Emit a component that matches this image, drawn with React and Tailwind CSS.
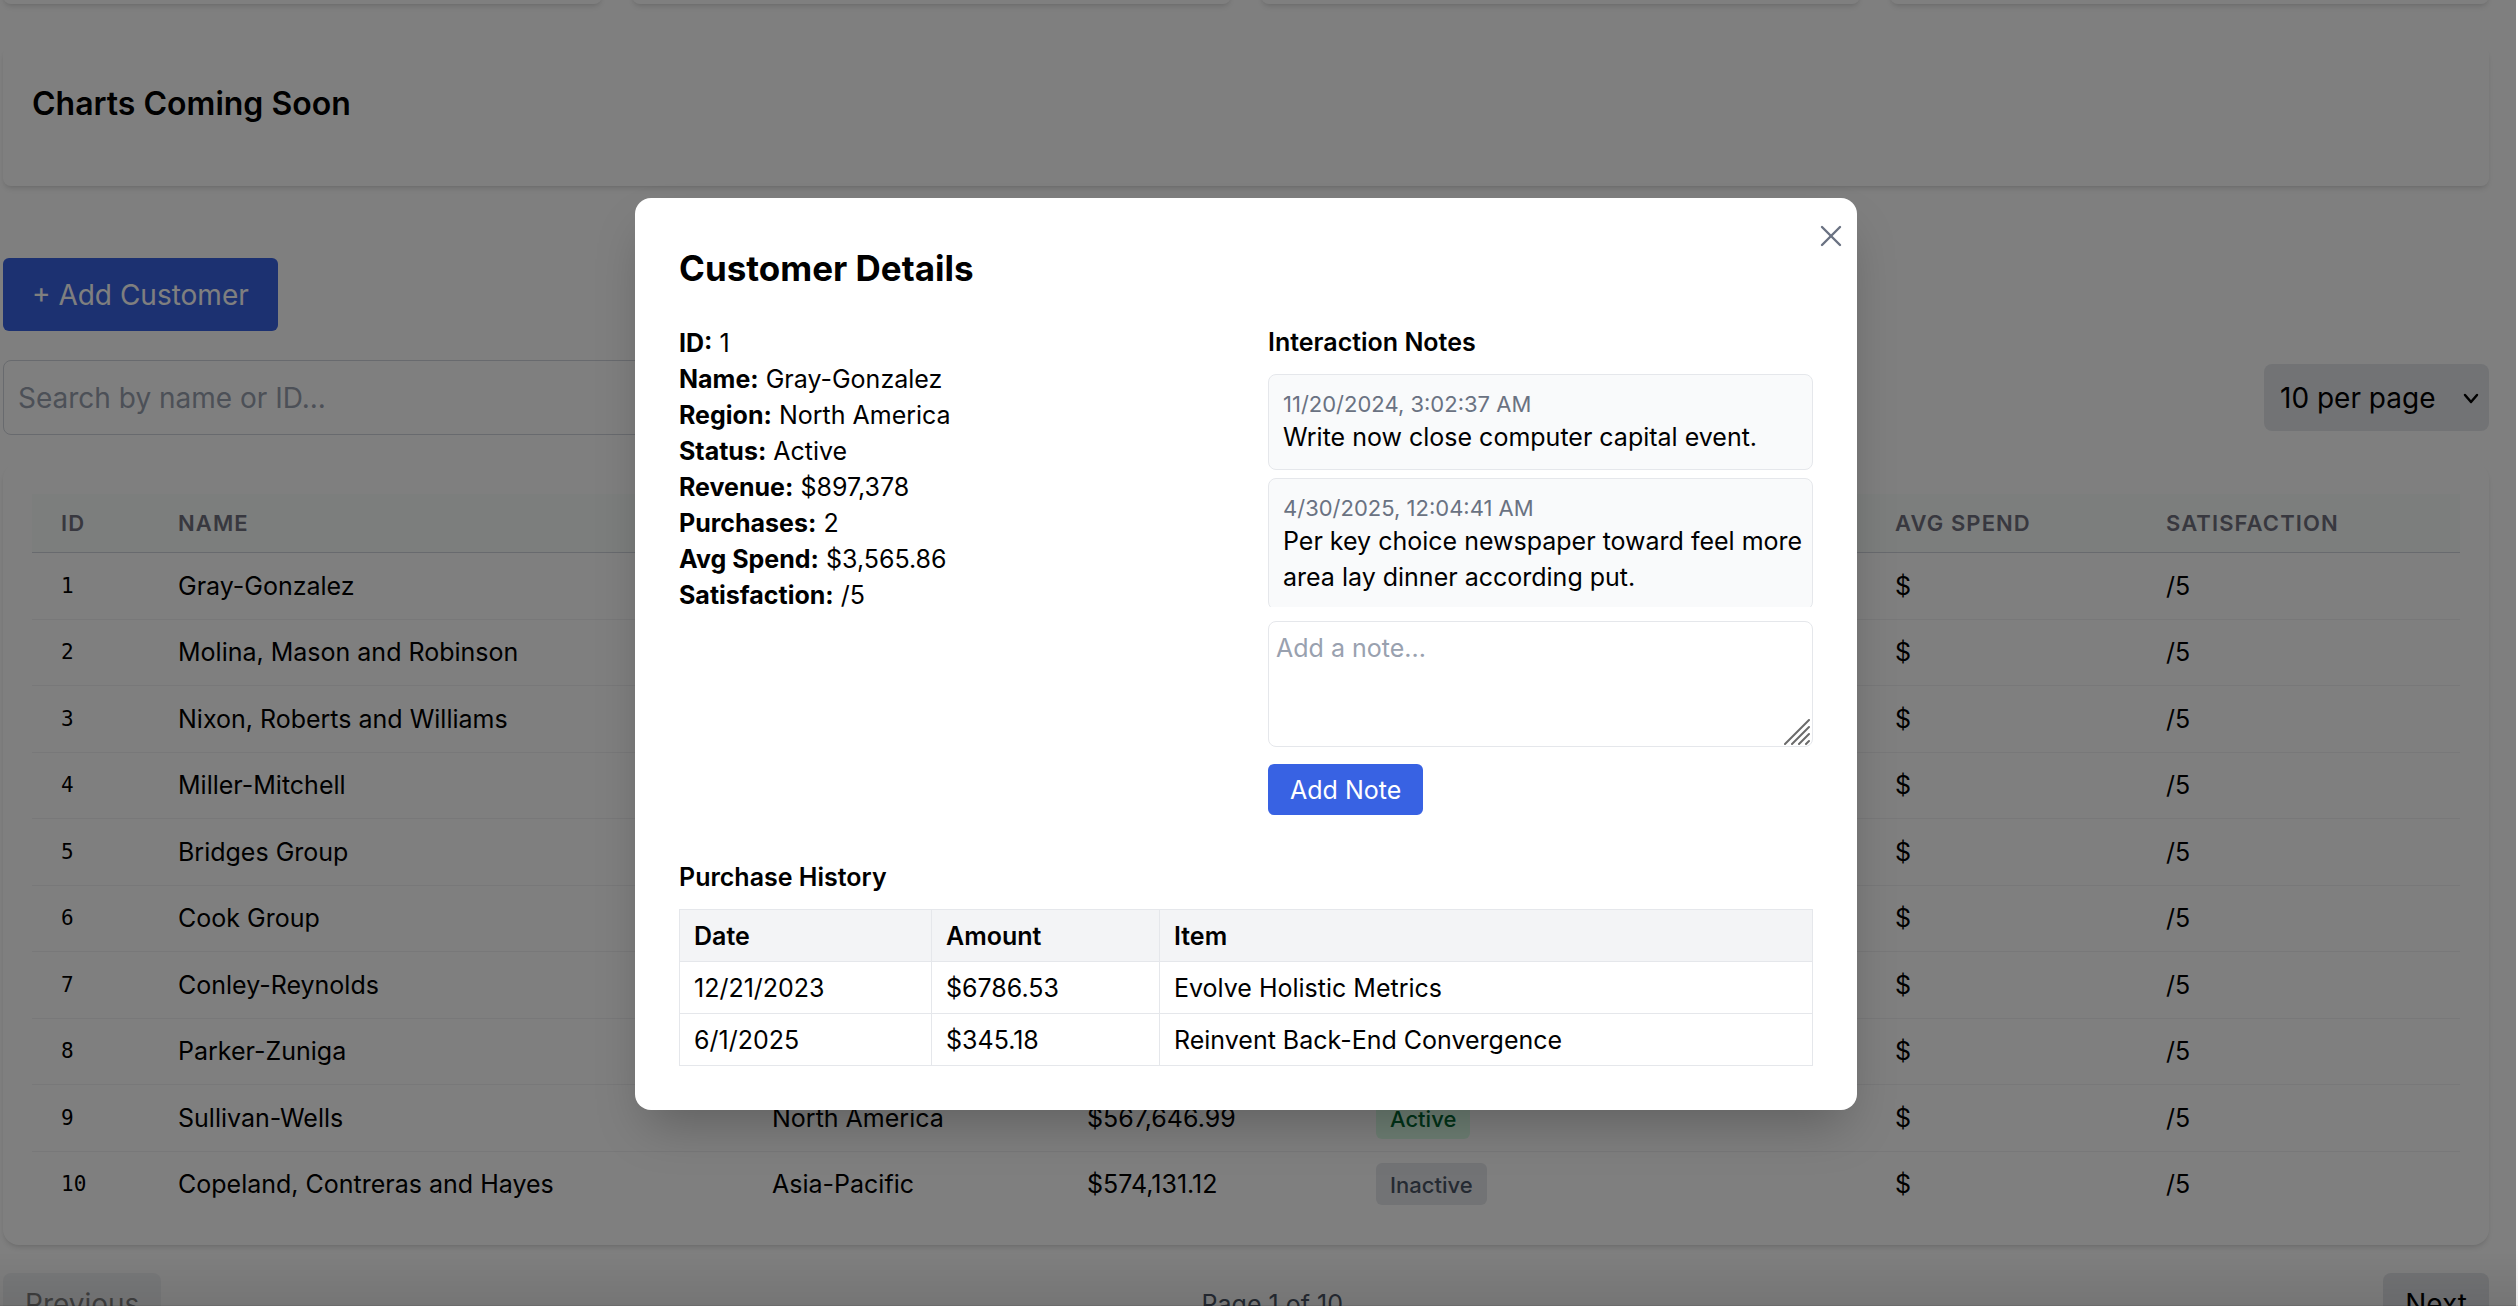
import { X } from 'lucide-react';

const customers = [
  { id: 1, name: 'Gray-Gonzalez' },
  { id: 2, name: 'Molina, Mason and Robinson' },
  { id: 3, name: 'Nixon, Roberts and Williams' },
  { id: 4, name: 'Miller-Mitchell' },
  { id: 5, name: 'Bridges Group' },
  { id: 6, name: 'Cook Group' },
  { id: 7, name: 'Conley-Reynolds' },
  { id: 8, name: 'Parker-Zuniga' },
  { id: 9, name: 'Sullivan-Wells', region: 'North America', revenue: '$567,646.99', status: 'Active' },
  { id: 10, name: 'Copeland, Contreras and Hayes', region: 'Asia-Pacific', revenue: '$574,131.12', status: 'Inactive' },
];

const details = [
  ['ID', '1'],
  ['Name', 'Gray-Gonzalez'],
  ['Region', 'North America'],
  ['Status', 'Active'],
  ['Revenue', '$897,378'],
  ['Purchases', '2'],
  ['Avg Spend', '$3,565.86'],
  ['Satisfaction', '/5'],
];

const notes = [
  ['11/20/2024, 3:02:37 AM', 'Write now close computer capital event.'],
  ['4/30/2025, 12:04:41 AM', 'Per key choice newspaper toward feel more area lay dinner according put.'],
];

const purchases = [
  ['12/21/2023', '$6786.53', 'Evolve Holistic Metrics'],
  ['6/1/2025', '$345.18', 'Reinvent Back-End Convergence'],
];

const columns = [
  { label: 'ID', text: 'ID' },
  { label: 'Name', text: 'Name' },
  { label: 'Region' },
  { label: 'Revenue' },
  { label: 'Status' },
  { label: 'Purchases' },
  { label: 'Avg Spend', text: 'Avg Spend' },
  { label: 'Satisfaction', text: 'Satisfaction' },
];

function StatusBadge({ status }) {
  const tone = status === 'Active' ? 'bg-green-100 text-green-800' : 'bg-gray-200 text-gray-600';
  return <span className={`inline-block rounded-md px-[14px] pt-[5px] pb-[3px] text-[22px] leading-[34px] font-medium ${tone}`}>{status}</span>;
}

function CustomerTable() {
  return (
    <div className="mt-7 rounded-2xl bg-white px-[29px] pt-[31px] pb-7 shadow-md">
      <table className="w-full table-fixed text-left text-[25px] leading-9">
        <colgroup>
          <col className="w-[117px]" />
          <col className="w-[594px]" />
          <col className="w-[315px]" />
          <col className="w-[289px]" />
          <col className="w-[253px]" />
          <col className="w-[266px]" />
          <col className="w-[271px]" />
          <col className="w-[323px]" />
        </colgroup>
        <thead>
          <tr className="h-[58px] border-b border-gray-300 bg-[#f8fcfa]">
            {columns.map((c) => (
              <th key={c.label} scope="col" aria-label={c.label} className="px-[29px] pt-px text-[22px] font-semibold tracking-wider text-[#71717f] uppercase">{c.text}</th>
            ))}
          </tr>
        </thead>
        <tbody>
          {customers.map((c) => (
            <tr key={c.id} className="border-b border-[#f0f1f3] last:border-0 odd:h-[67px] even:h-[66px]">
              <td className="px-[29px] font-['DejaVu_Sans_Mono',monospace] text-[21px]">{c.id}</td>
              <td className="px-[29px]">{c.name}</td>
              <td className="px-[29px]">{c.region}</td>
              <td className="px-[29px]">{c.revenue}</td>
              <td className="px-[29px]">{c.status && <StatusBadge status={c.status} />}</td>
              <td className="px-[29px]" />
              <td className="px-[29px]">$</td>
              <td className="px-[29px]">/5</td>
            </tr>
          ))}
        </tbody>
      </table>
    </div>
  );
}

function CustomerDialog() {
  return (
    <div role="dialog" aria-modal="true" aria-labelledby="dialog-title" className="relative w-full max-w-[1222px] rounded-2xl bg-white p-11 shadow-2xl">
      <button type="button" aria-label="Close" className="absolute top-5 right-2 text-gray-500">
        <X size={36} strokeWidth={1.6} />
      </button>
      <h2 id="dialog-title" className="mb-[30px] pt-px text-[35px] leading-[51px] font-bold">Customer Details</h2>
      <div className="grid grid-cols-2 gap-11 text-[25px] leading-9">
        <div className="pt-px">
          {details.map(([label, value]) => (
            <p key={label}><strong>{label}:</strong> {value}</p>
          ))}
        </div>
        <div>
          <h3 className="mb-[14px] font-semibold">Interaction Notes</h3>
          <div className="max-h-[233px] space-y-2 overflow-hidden">
            {notes.map(([date, text]) => (
              <div key={date} className="rounded-lg border border-gray-200 bg-gray-50 py-[14px] pr-1 pl-[14px]">
                <div className="text-[22px] leading-[30px] text-gray-500">{date}</div>
                <div>{text}</div>
              </div>
            ))}
          </div>
          <div className="relative mt-[14px]">
            <textarea aria-label="Add a note" placeholder="Add a note..." className="block h-[126px] w-full resize-none rounded-lg border border-gray-200 px-[7px] py-2 placeholder:text-gray-400" />
            <svg className="pointer-events-none absolute right-[3px] bottom-[2px]" width="26" height="26" viewBox="0 0 26 26" stroke="#6b6b6b" strokeWidth="2" strokeLinecap="round" aria-hidden="true">
              <path d="M1 25 25 1M8 25 25 8M15 25 25 15M22 25 25 22" />
            </svg>
          </div>
          <button type="button" className="mt-[17px] rounded-md bg-[#3862e3] px-[22px] pt-2 pb-[7px] text-white">Add Note</button>
        </div>
      </div>
      <h3 className="mt-[44px] mb-[14px] text-[25px] leading-9 font-semibold">Purchase History</h3>
      <table className="w-full table-fixed border-collapse text-left text-[25px] leading-9">
        <colgroup>
          <col className="w-[252px]" />
          <col className="w-[228px]" />
          <col />
        </colgroup>
        <thead>
          <tr className="bg-gray-100">
            {['Date', 'Amount', 'Item'].map((h) => (
              <th key={h} scope="col" className="h-[52px] border border-gray-200 px-[14px] font-semibold">{h}</th>
            ))}
          </tr>
        </thead>
        <tbody>
          {purchases.map((row) => (
            <tr key={row[0]}>
              {row.map((cell) => (
                <td key={cell} className="h-[52px] border border-gray-200 px-[14px]">{cell}</td>
              ))}
            </tr>
          ))}
        </tbody>
      </table>
    </div>
  );
}

export default function App() {
  return (
    <div className="relative h-screen overflow-hidden bg-white font-[Inter,sans-serif] text-black">
      <main className="-mt-11 pr-[29px] pl-[3px]">
        <div className="grid grid-cols-4 gap-[30px]">
          {[0, 1, 2, 3].map((i) => (
            <div key={i} className="h-12 rounded-lg bg-white shadow-md" />
          ))}
        </div>
        <section className="mt-[43px] rounded-lg bg-white px-[29px] pt-8 pb-[57px] shadow-md">
          <h2 className="text-[32px] leading-[50px] font-semibold">Charts Coming Soon</h2>
        </section>
        <button type="button" className="mt-[72px] block rounded-md bg-[#3862e3] px-[29px] pt-4 pb-[14px] text-[28px] leading-[43px] text-white">+ Add Customer</button>
        <div className="mt-[29px] flex items-center justify-between">
          <input type="text" aria-label="Search customers" placeholder="Search by name or ID..." className="h-[75px] w-[815px] rounded-lg border border-gray-300 px-[14px] pt-px text-[28px] placeholder:text-gray-400" />
          <div className="relative">
            <select aria-label="Rows per page" className="h-[67px] w-[225px] appearance-none rounded-lg bg-gray-200 pt-px pl-4 text-[28px]">
              <option>10 per page</option>
            </select>
            <svg className="pointer-events-none absolute top-[29px] right-[10px]" width="16" height="12" viewBox="0 0 16 12" fill="none" stroke="black" strokeWidth="2.5" strokeLinecap="round" strokeLinejoin="round" aria-hidden="true">
              <path d="m2 2 6 7 6-7" />
            </svg>
          </div>
        </div>
        <CustomerTable />
        <div className="mt-7 flex items-center justify-between text-[28px] leading-[43px]">
          <button type="button" disabled className="rounded-lg bg-gray-200 px-[22px] py-[10px] opacity-50">Previous</button>
          <span className="text-[25px] text-gray-600">Page 1 of 10</span>
          <button type="button" className="rounded-lg bg-gray-200 px-[22px] py-[10px]">Next</button>
        </div>
      </main>
      <div className="absolute inset-y-0 right-[2px] left-0 flex items-center justify-center bg-black/50 pt-[2px] pr-6">
        <CustomerDialog />
      </div>
      <div className="pointer-events-none absolute inset-x-0 bottom-0 h-14 border-b border-black/15 bg-linear-to-b from-transparent to-black/8" />
    </div>
  );
}
